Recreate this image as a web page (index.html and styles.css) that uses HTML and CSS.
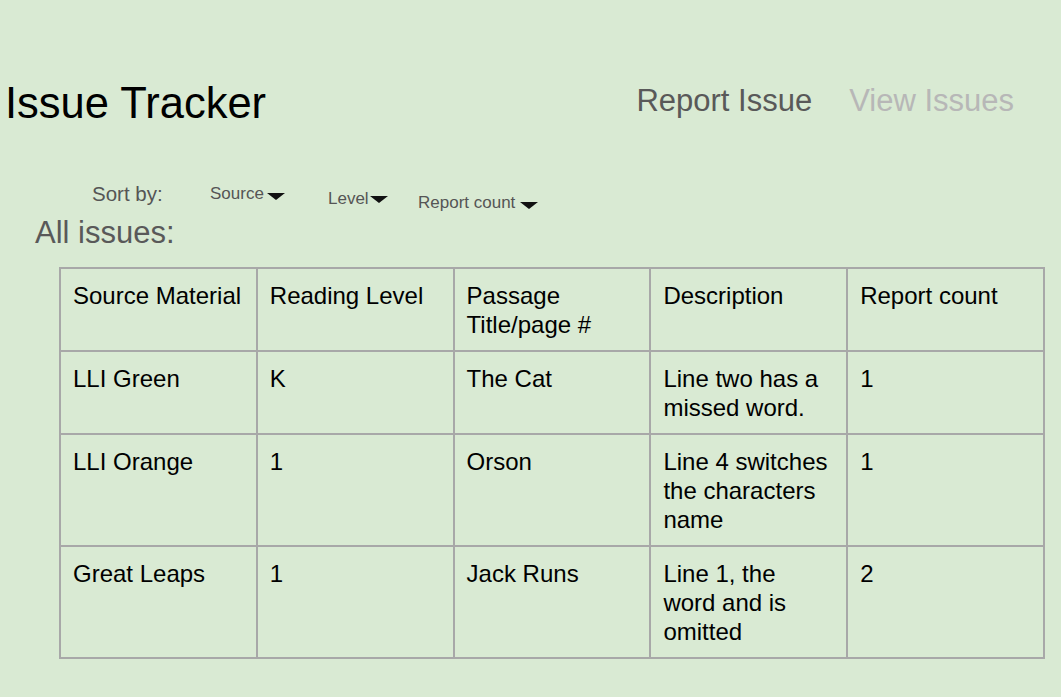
FILE: index.html
```html
<!DOCTYPE html>
<html>
<head>
<meta charset="utf-8">
<title>Issue Tracker</title>
<link rel="stylesheet" href="styles.css">
</head>
<body>
<header class="topbar">
  <h1 class="title">Issue Tracker</h1>
  <nav class="nav">
    <a class="nav-link active" href="#">Report Issue</a>
    <a class="nav-link muted" href="#">View Issues</a>
  </nav>
</header>
<div class="sortbar">
  <span class="sort-label">Sort by:</span>
  <span class="sort-item sort-source">Source <svg class="caret" width="18" height="7" viewBox="0 0 18 7"><polygon points="0,0 18,0 9,7" /></svg></span>
  <span class="sort-item sort-level">Level<svg class="caret" width="18" height="7" viewBox="0 0 18 7"><polygon points="0,0 18,0 9,7" /></svg></span>
  <span class="sort-item sort-count">Report count <svg class="caret" width="18" height="7" viewBox="0 0 18 7"><polygon points="0,0 18,0 9,7" /></svg></span>
</div>
<h2 class="section-title">All issues:</h2>
<table class="issues">
  <thead>
    <tr>
      <th>Source Material</th>
      <th>Reading Level</th>
      <th>Passage Title/page #</th>
      <th>Description</th>
      <th>Report count</th>
    </tr>
  </thead>
  <tbody>
    <tr>
      <td>LLI Green</td>
      <td>K</td>
      <td>The Cat</td>
      <td>Line two has a missed word.</td>
      <td>1</td>
    </tr>
    <tr>
      <td>LLI Orange</td>
      <td>1</td>
      <td>Orson</td>
      <td>Line 4 switches the characters name</td>
      <td>1</td>
    </tr>
    <tr>
      <td>Great Leaps</td>
      <td>1</td>
      <td>Jack Runs</td>
      <td>Line 1, the word and is omitted</td>
      <td>2</td>
    </tr>
  </tbody>
</table>
</body>
</html>
```
FILE: styles.css
```css
html, body {
  margin: 0;
  padding: 0;
  background: #d9ead3;
  font-family: "Liberation Sans", Arial, sans-serif;
}

.topbar {
  display: flex;
  justify-content: space-between;
  align-items: flex-start;
  padding: 78px 47px 0 5px;
}

.title {
  margin: 0;
  font-size: 43.5px;
  line-height: 50px;
  font-weight: normal;
  color: #000;
}

.nav {
  display: flex;
  gap: 37px;
  margin-top: 5px;
}

.nav-link {
  font-size: 31px;
  line-height: 36px;
  text-decoration: none;
}

.nav-link.active {
  color: #595959;
}

.nav-link.muted {
  color: #b7b7b7;
}

.sortbar {
  display: flex;
  align-items: flex-start;
  padding-left: 92px;
  margin-top: 54px;
  height: 29px;
  color: #555;
}

.sort-label {
  width: 118px;
  font-size: 20.5px;
  line-height: 23px;
}

.sort-item {
  font-size: 17px;
  line-height: 20px;
  display: flex;
  align-items: center;
}

.sort-source {
  width: 118px;
  padding-top: 2px;
}

.sort-level {
  width: 90px;
  padding-top: 7px;
}

.sort-count {
  padding-top: 11px;
}

.caret {
  fill: #111;
  margin-left: 3px;
  margin-top: 4px;
}

.sort-level .caret {
  margin-left: 1px;
  margin-top: 0;
}

.sort-count .caret {
  margin-left: 5px;
}

.section-title {
  margin: 4px 0 0 35px;
  font-size: 31px;
  line-height: 36px;
  font-weight: normal;
  color: #595959;
}

.issues {
  margin: 16px 0 0 59px;
  width: 986px;
  table-layout: fixed;
  border-collapse: collapse;
  font-size: 24px;
  line-height: 29px;
  color: #000;
}

.issues th,
.issues td {
  border: 2px solid #a8a8a8;
  padding: 12px 14px 11px 12px;
  text-align: left;
  vertical-align: top;
  font-weight: normal;
}
```
